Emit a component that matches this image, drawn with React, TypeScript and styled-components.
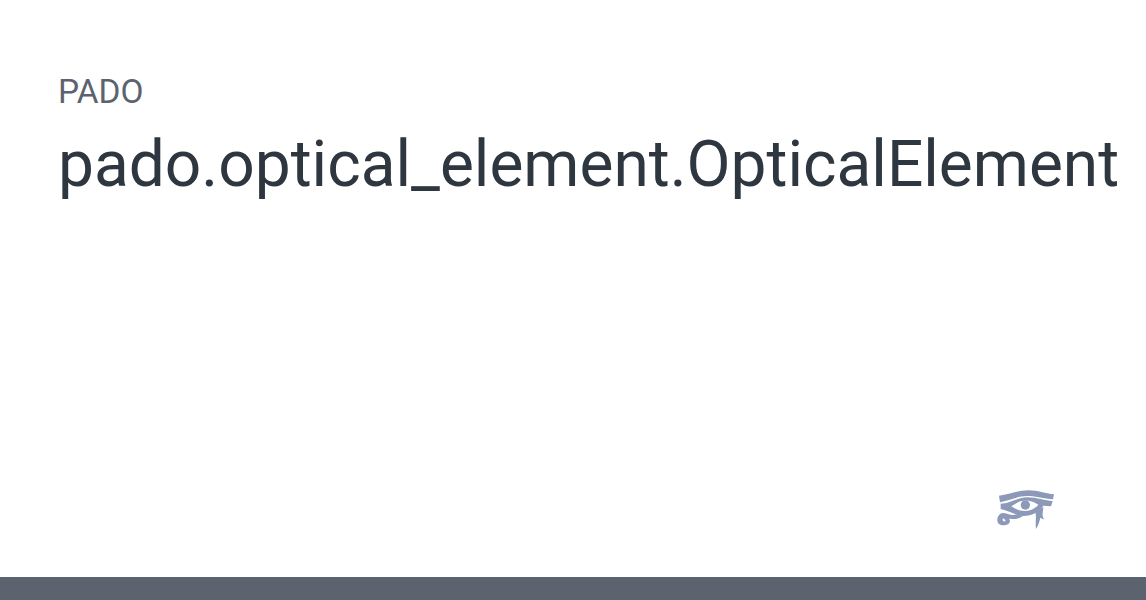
import React from "react";
import styled, { createGlobalStyle } from "styled-components";

const GlobalStyle = createGlobalStyle`
  html, body {
    margin: 0;
    background-color: #ffffff;
  }
`;

const Page = styled.div`
  display: flex;
  flex-direction: column;
  height: 100vh;
  overflow: hidden;
  font-family: Roboto, "Liberation Sans", sans-serif;
`;

const Content = styled.main`
  flex: 1;
  display: flex;
  flex-direction: column;
  padding: 72px 0 0 58px;
`;

const Project = styled.div`
  font-size: 33.4px;
  line-height: 40px;
  color: #5c636e;
`;

const Title = styled.h1`
  margin: 13px 0 0;
  font-size: 64px;
  line-height: 80px;
  font-weight: 400;
  color: #2e3640;
  white-space: nowrap;
`;

const LogoRow = styled.div`
  display: flex;
  justify-content: flex-end;
  padding: 0 76px 32px 0;
`;

const Logo = styled.svg`
  display: block;
  fill: #8d99b9;
`;

const Footer = styled.footer`
  height: 23px;
  background-color: #5b636e;
`;

const EyeLogo = () => (
  <Logo width="90" height="70" viewBox="0 0 270 210">
    <path d="M57 62 C90 58 115 46 145 46 C175 46 195 56 222 58 L219 73 C190 71 170 63 142 63 C112 63 95 75 60 82 Z" />
    <path d="M62 86 C90 86 110 68 142 67 C172 67 195 78 218 78 L213 94 L190 92 C182 106 160 122 132 123 C108 123 86 106 62 102 Z M94 94 C106 102 118 108 134 108 C152 108 166 100 175 89 C160 80 146 76 132 77 C116 78 106 86 94 94 Z" fillRule="evenodd" />
    <circle cx="136" cy="90" r="14" />
    <path d="M110 118 C94 124 82 114 68 114 C54 116 47 136 56 146 C66 155 88 152 90 138 C90 127 74 125 71 132 C78 132 78 141 71 139 C64 135 69 128 76 129 C92 132 108 136 128 124 Z" />
    <path d="M166 112 L190 96 C190 110 184 120 192 132 C188 134 184 128 181 128 C179 140 173 154 168 162 C165 142 170 126 166 112 Z" />
  </Logo>
);

const App = () => {
  return (
    <>
      <GlobalStyle />
      <Page>
        <Content>
          <Project>PADO</Project>
          <Title>pado.optical_element.OpticalElement</Title>
        </Content>
        <LogoRow>
          <EyeLogo />
        </LogoRow>
        <Footer />
      </Page>
    </>
  );
};

export default App;
